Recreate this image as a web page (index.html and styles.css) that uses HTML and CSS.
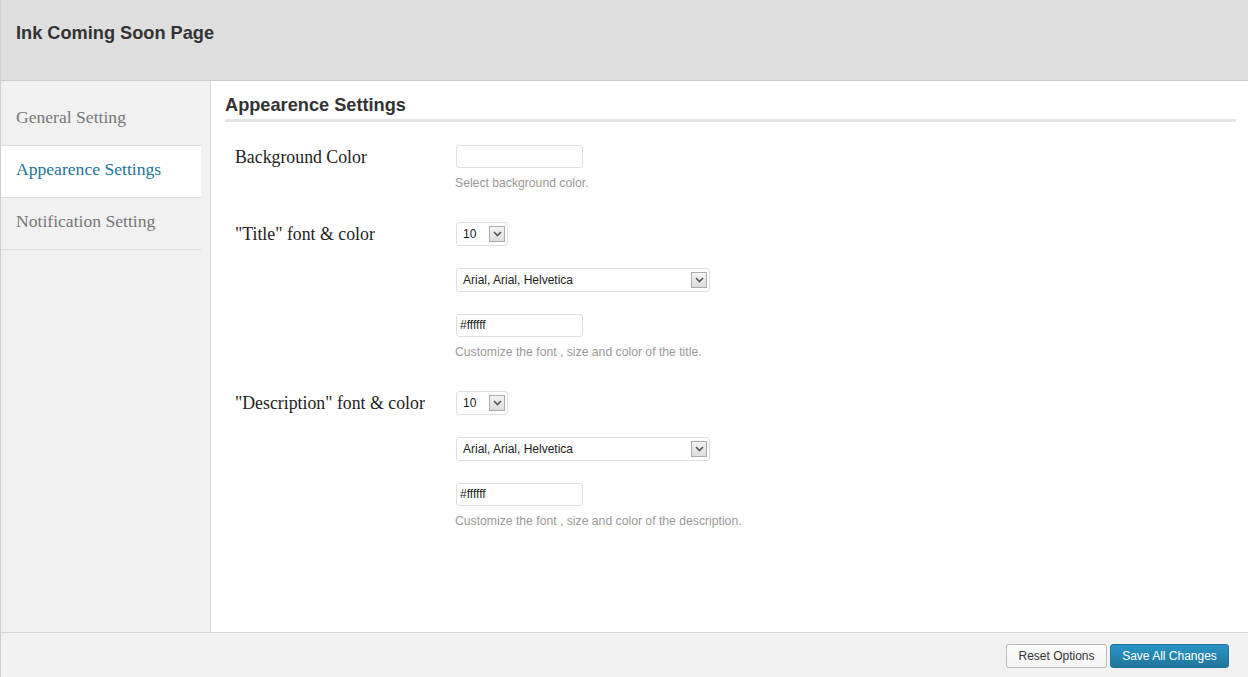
FILE: index.html
```html
<!DOCTYPE html>
<html>
<head>
<meta charset="utf-8">
<link rel="stylesheet" href="styles.css">
</head>
<body>
<div class="wrap">
  <header class="top"><h2 class="title">Ink Coming Soon Page</h2></header>
  <div class="main">
    <nav class="side">
      <div class="side-spacer"></div>
      <a class="tab">General Setting</a>
      <a class="tab active">Appearence Settings</a>
      <a class="tab">Notification Setting</a>
    </nav>
    <section class="content">
      <h3 class="sec-title">Appearence Settings</h3>
      <div class="row">
        <div class="label">Background Color</div>
        <div class="fields">
          <div class="input"></div>
          <div class="help">Select background color.</div>
        </div>
      </div>
      <div class="row">
        <div class="label">"Title" font &amp; color</div>
        <div class="fields">
          <div class="select small"><span>10</span><i class="arr"><svg width="9" height="6" viewBox="0 0 9 6"><path d="M1 1 L4.5 4.5 L8 1" fill="none" stroke="#555" stroke-width="1.6"/></svg></i></div>
          <div class="select big"><span>Arial, Arial, Helvetica</span><i class="arr"><svg width="9" height="6" viewBox="0 0 9 6"><path d="M1 1 L4.5 4.5 L8 1" fill="none" stroke="#555" stroke-width="1.6"/></svg></i></div>
          <div class="input">#ffffff</div>
          <div class="help">Customize the font , size and color of the title.</div>
        </div>
      </div>
      <div class="row">
        <div class="label">"Description" font &amp; color</div>
        <div class="fields">
          <div class="select small"><span>10</span><i class="arr"><svg width="9" height="6" viewBox="0 0 9 6"><path d="M1 1 L4.5 4.5 L8 1" fill="none" stroke="#555" stroke-width="1.6"/></svg></i></div>
          <div class="select big"><span>Arial, Arial, Helvetica</span><i class="arr"><svg width="9" height="6" viewBox="0 0 9 6"><path d="M1 1 L4.5 4.5 L8 1" fill="none" stroke="#555" stroke-width="1.6"/></svg></i></div>
          <div class="input">#ffffff</div>
          <div class="help">Customize the font , size and color of the description.</div>
        </div>
      </div>
    </section>
  </div>
  <footer class="foot">
    <button class="btn">Reset Options</button>
    <button class="btn primary">Save All Changes</button>
  </footer>
</div>
</body>
</html>
```
FILE: styles.css
```css
html, body { margin: 0; padding: 0; background: #fff; }
body { font-family: "Liberation Sans", Arial, sans-serif; }
.wrap {
  width: 1248px; height: 677px; box-sizing: border-box;
  border-left: 1px solid #cfcfcf;
  display: flex; flex-direction: column;
}
.top {
  height: 80px; background: #dfdfdf; border-bottom: 1px solid #cccccc;
  display: flex; align-items: flex-start; box-sizing: content-box;
}
.title {
  margin: 0; padding: 22px 0 0 15px;
  font-size: 18.2px; font-weight: bold; color: #333; line-height: 22px;
}
.main { flex: 1; display: flex; min-height: 0; }
.side {
  width: 209px; background: #f1f1f1; border-right: 1px solid #d8d8d8;
  display: flex; flex-direction: column;
}
.side-spacer { height: 13px; }
.tab {
  display: block; width: 200px; height: 52px; box-sizing: border-box;
  border-bottom: 1px solid #dcdcdc;
  font-family: "Liberation Serif", "Times New Roman", serif;
  font-size: 17.6px; color: #777; line-height: 47px; padding-left: 15px;
}
.tab.active { background: #fff; color: #21759b; }
.content { flex: 1; padding: 14px 12px 0 14px; }
.sec-title {
  margin: 0; font-size: 18.2px; font-weight: bold; color: #333;
  line-height: 20px; padding-bottom: 4px;
  border-bottom: 3px solid #e5e5e5;
}
.row { display: flex; padding: 23px 0 8px 10px; }
.row + .row { padding-top: 24px; }
.label {
  width: 221px; font-family: "Liberation Serif", "Times New Roman", serif;
  font-size: 17.8px; color: #222; line-height: 20px; padding-top: 2px;
}
.fields { display: flex; flex-direction: column; align-items: flex-start; }
.input {
  width: 127px; height: 23px; box-sizing: border-box;
  border: 1px solid #dfdfdf; border-radius: 3px; background: #fff;
  font-size: 12px; color: #222; line-height: 21px; padding-left: 3px;
}
.help { font-size: 12.2px; color: #999; margin-top: 8px; line-height: 14px; margin-left: -1px; }
.select {
  height: 24px; box-sizing: border-box; border: 1px solid #dfdfdf; border-radius: 3px;
  background: #fff; display: flex; align-items: center; justify-content: space-between;
  font-size: 12px; color: #222; padding: 0 2px 0 6px; margin-bottom: 22px;
}
.select.small { width: 52px; }
.select.big { width: 254px; }
.arr {
  width: 16px; height: 16px; box-sizing: border-box; border: 1px solid #aaa;
  background: linear-gradient(#f4f4f4, #dcdcdc);
  display: flex; align-items: center; justify-content: center;
}
.foot {
  height: 44px; background: #f2f2f2; border-top: 1px solid #d4d4d4;
  display: flex; justify-content: flex-end; align-items: center;
  padding-right: 19px; gap: 3px;
}
.btn {
  height: 24px; font-family: "Liberation Sans", Arial, sans-serif; font-size: 12px;
  border-radius: 3px; border: 1px solid #bbb; background: linear-gradient(#fefefe, #f4f4f4);
  color: #333; padding: 0 10px; margin-top: 1px;
}
.btn:first-child { width: 101px; }
.btn.primary {
  width: 119px; background: linear-gradient(#2a95c5, #21759b); border-color: #21759b;
  color: #fff;
}
```
